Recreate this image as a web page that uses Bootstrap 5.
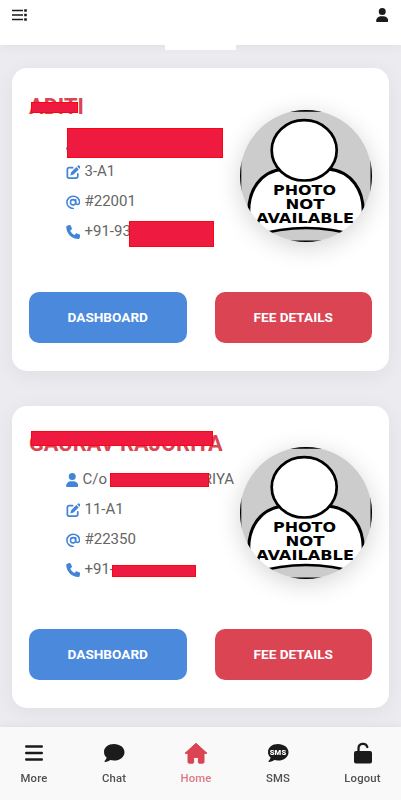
<!DOCTYPE html>
<html lang="en">
<head>
<meta charset="utf-8">
<meta name="viewport" content="width=device-width, initial-scale=1">
<title>Students</title>
<link href="https://cdn.jsdelivr.net/npm/bootstrap@5.3.0/dist/css/bootstrap.min.css" rel="stylesheet">
<style>
body{font-family:Roboto,"Liberation Sans",sans-serif;background:#ebebf0;height:800px;overflow:hidden;color:#656565}
svg{display:block;flex:none}
.topbar{height:44.5px;padding:8px 13px 0 12px;box-shadow:0 2px 9px rgba(0,0,0,.05);position:relative}
.topbar .tab{position:absolute;left:165px;top:44px;width:70.5px;height:6px;background:#fff}
.topbar svg,.bottombar svg{color:#1b1b1b}
.people{padding:23.5px 12px 0;gap:35px}
.person{height:302.5px;border:0;border-radius:15px;padding:0 17px;box-shadow:0 4px 22px rgba(0,0,0,.06)}
.person-top{height:223.5px}
.person h2{font-size:21.8px;font-weight:700;color:#da4453;line-height:26px;margin:25.8px 0 0;white-space:nowrap;width:max-content}
.facts{width:205px;padding:7.200px 0 0 36.500px;font-size:15px}
.fact{height:29.8px;white-space:nowrap;gap:4.5px}
.fact svg{color:#4284d8;margin-top:2px}
.cover{position:absolute;background:#ef1a40;border:1px solid #fa0512}
.photo{position:absolute;left:228px;top:41.5px;width:132px;height:132px;border-radius:50%;box-shadow:0 5px 24px rgba(0,0,0,.17);overflow:hidden}
.action{height:51px;border-radius:10px;font-size:13.6px;font-weight:700;color:#fff;width:157.5px;padding:0;border:0}
.blue{background:#4a89dc}.red{background:#da4453}
.n-a{left:19px;top:34px;width:47px;height:11px}
.c-a{left:55px;top:60px;width:156px;height:30px}
.p-a{left:117px;top:153px;width:85px;height:26px}
.n-b{left:19px;top:25px;width:182px;height:15px}
.c-b{left:98px;top:67.5px;width:99px;height:14px}
.p-b{left:100px;top:159px;width:84px;height:12px}
.bottombar{height:73px;background:#f9f9f9;padding:15px 0 0;font-size:11.3px;font-weight:500;color:#505050;box-shadow:0 0 8px rgba(0,0,0,.07);letter-spacing:.15px}
.bottombar a{width:92px;color:inherit;gap:6px;line-height:17px}
.bottombar a:first-child{width:68px}
.bottombar a:last-child{width:77px}
.bottombar a svg{height:22px}
.bottombar .current{width:72px;color:#dc7983}
.bottombar .current svg{color:#da4453}
</style>
</head>
<body class="d-flex flex-column">
<svg class="d-none" aria-hidden="true">
 <symbol id="user" viewBox="0 0 448 512"><path fill="currentColor" d="M224 256A128 128 0 1 0 224 0a128 128 0 1 0 0 256zm-45.700 48C79.800 304 0 383.800 0 482.300 0 498.700 13.300 512 29.700 512h388.600c16.400 0 29.700-13.300 29.700-29.700C448 383.800 368.200 304 269.700 304z"/></symbol>
 <symbol id="edit" viewBox="0 0 16 16"><path fill="none" stroke="currentColor" stroke-width="1.9" stroke-linecap="round" d="M7.300 3H3.600Q1.500 3 1.500 5.100v7.300q0 2.100 2.100 2.100h7.300q2.100 0 2.100-2.100V9.700"/><path fill="currentColor" d="M11.400 2.300l2.600 2.600-5.700 5.700-3.500.9.900-3.500zM12.200 1.500l.8-.8q.9-.9 1.900.1l.8.800q.9.900 0 1.900l-.8.700z"/></symbol>
 <symbol id="at" viewBox="0 0 16 16"><g fill="none" stroke="currentColor" stroke-width="1.700" stroke-linecap="round"><circle cx="7.800" cy="8" r="2.900"/><path d="M10.700 5.200v3.500c0 2.800 4.300 2.300 4.300-.9A7 6.700 0 1 0 8 14.800"/></g></symbol>
 <symbol id="phone" viewBox="0 0 512 512"><path fill="currentColor" d="M164.900 24.600c-7.700-18.600-28-28.500-47.400-23.200l-88 24C12.100 30.200 0 46 0 64c0 247.400 200.600 448 448 448 18 0 33.800-12.100 38.600-29.500l24-88c5.300-19.400-4.600-39.700-23.200-47.400l-96-40c-16.300-6.800-35.200-2.100-46.300 11.600L304.700 368C234.300 334.700 177.300 277.700 144 207.300L193.300 167c13.700-11.200 18.400-30 11.600-46.300l-40-96z"/></symbol>
 <symbol id="nophoto" viewBox="0 0 132 132"><path fill="#ccc" d="M0 0h132v132H0z"/><path d="M45 0h42v1.700H45zM0 45h1.300v42H0zM130.500 45h1.500v42h-1.500z"/><path fill="#fff" stroke="#000" stroke-width="3" d="M9 106C7 80 21 61 44 59h44c23 2 37 21 35 47v30H9z"/><path fill="#ccc" stroke="#000" stroke-width="2.600" d="M14 126Q66 110 118 126v14H14z"/><path d="M45 130.500h42v1.500H45z"/><ellipse cx="64.200" cy="40.300" rx="32.500" ry="30.200" fill="#fff" stroke="#000" stroke-width="2.700"/><g font-family="DejaVu Sans,sans-serif" font-weight="700" font-size="14" text-anchor="middle"><text x="64.500" y="85.200" textLength="63" lengthAdjust="spacingAndGlyphs">PHOTO</text><text x="65" y="99.200" textLength="39" lengthAdjust="spacingAndGlyphs">NOT</text><text x="65" y="113.200" textLength="98" lengthAdjust="spacingAndGlyphs">AVAILABLE</text></g></symbol>
 <symbol id="bubble" viewBox="0 0 22 20"><path fill="currentColor" d="M11 1C5.200 1 1 4.500 1 9c0 2.300 1 4.200 2.600 5.600-.3 1.500-1.100 2.700-2 3.500-.4.500-.1.900.4.900 2.200 0 4-.9 5.200-1.900 1.200.3 2.400.5 3.800.5 5.800 0 10.500-3.800 10.500-8.400S16.800 1 11 1z"/></symbol>
</svg>

<header class="topbar bg-white d-flex justify-content-between flex-shrink-0">
 <svg width="15" height="14" viewBox="0 0 15 14"><path fill="none" stroke="currentColor" stroke-width="1.400" d="M0 2.500h11M0 7h11M0 11.500h11"/><path fill="none" stroke="currentColor" stroke-width="2.500" d="M12.200 2.500h2.600M12.200 7h2.600M12.200 11.500h2.600"/></svg>
 <svg width="12.500" height="14"><use href="#user"/></svg>
 <span class="tab"></span>
</header>

<main class="people d-flex flex-column flex-grow-1">
 <article class="card person flex-shrink-0">
  <div class="person-top">
   <h2>ADITI</h2>
   <div class="facts">
    <div class="fact d-flex align-items-center"><svg width="12.500" height="14"><use href="#user"/></svg></div>
    <div class="fact d-flex align-items-center"><svg width="14.500" height="14.500"><use href="#edit"/></svg>3-A1</div>
    <div class="fact d-flex align-items-center"><svg width="14.500" height="14.500"><use href="#at"/></svg>#22001</div>
    <div class="fact d-flex align-items-center"><svg width="14.500" height="14"><use href="#phone"/></svg>+91-93</div>
   </div>
   <span class="cover n-a"></span><span class="cover c-a"></span><span class="cover p-a"></span>
   <div class="photo"><svg width="132" height="132"><use href="#nophoto"/></svg></div>
  </div>
  <div class="d-flex justify-content-between"><a class="btn action blue d-flex align-items-center justify-content-center">DASHBOARD</a><a class="btn action red d-flex align-items-center justify-content-center">FEE DETAILS</a></div>
 </article>

 <article class="card person flex-shrink-0">
  <div class="person-top">
   <h2>GAURAV RAJORIYA</h2>
   <div class="facts">
    <div class="fact d-flex align-items-center"><svg width="12.500" height="14"><use href="#user"/></svg><span>C/o</span><span class="ms-auto">RIYA</span></div>
    <div class="fact d-flex align-items-center"><svg width="14.500" height="14.500"><use href="#edit"/></svg>11-A1</div>
    <div class="fact d-flex align-items-center"><svg width="14.500" height="14.500"><use href="#at"/></svg>#22350</div>
    <div class="fact d-flex align-items-center"><svg width="14.500" height="14"><use href="#phone"/></svg>+91-</div>
   </div>
   <span class="cover n-b"></span><span class="cover c-b"></span><span class="cover p-b"></span>
   <div class="photo"><svg width="132" height="132"><use href="#nophoto"/></svg></div>
  </div>
  <div class="d-flex justify-content-between"><a class="btn action blue d-flex align-items-center justify-content-center">DASHBOARD</a><a class="btn action red d-flex align-items-center justify-content-center">FEE DETAILS</a></div>
 </article>
</main>

<nav class="bottombar fixed-bottom d-flex">
 <a class="d-flex flex-column align-items-center text-decoration-none"><svg width="18" viewBox="0 0 18 22"><path stroke="currentColor" stroke-width="2.400" stroke-linecap="round" d="M1.200 4.500h15.600M1.200 11h15.600M1.200 17.500h15.600"/></svg>More</a>
 <a class="d-flex flex-column align-items-center text-decoration-none"><svg width="22"><use href="#bubble"/></svg>Chat</a>
 <a class="current d-flex flex-column align-items-center text-decoration-none"><svg width="24" viewBox="0 0 24 22"><path fill="currentColor" stroke="currentColor" stroke-linejoin="round" d="M12 1.300L1 11.300h3v8.700q0 1.200 1.200 1.200h3.600q.8 0 .8-.8v-5h4.800v5q0 .8.800.8h3.600q1.200 0 1.200-1.200v-8.700h3z"/></svg>Home</a>
 <a class="d-flex flex-column align-items-center text-decoration-none"><svg width="22" viewBox="0 0 22 22"><use href="#bubble" width="22" height="22"/><text x="11" y="13" text-anchor="middle" fill="#fff" font-family="Roboto,sans-serif" font-weight="900" font-size="8" textLength="16.500" lengthAdjust="spacingAndGlyphs">SMS</text></svg>SMS</a>
 <a class="d-flex flex-column align-items-center text-decoration-none"><svg width="20" viewBox="0 0 20 22"><rect x="1" y="9" width="18" height="12.500" rx="2" fill="currentColor"/><path fill="none" stroke="currentColor" stroke-width="2.300" stroke-linecap="round" d="M5.500 10V6.200a4.500 4.500 0 0 1 8.800-1.200"/></svg>Logout</a>
</nav>
<script src="https://cdn.jsdelivr.net/npm/bootstrap@5.3.0/dist/js/bootstrap.bundle.min.js"></script>
</body>
</html>
